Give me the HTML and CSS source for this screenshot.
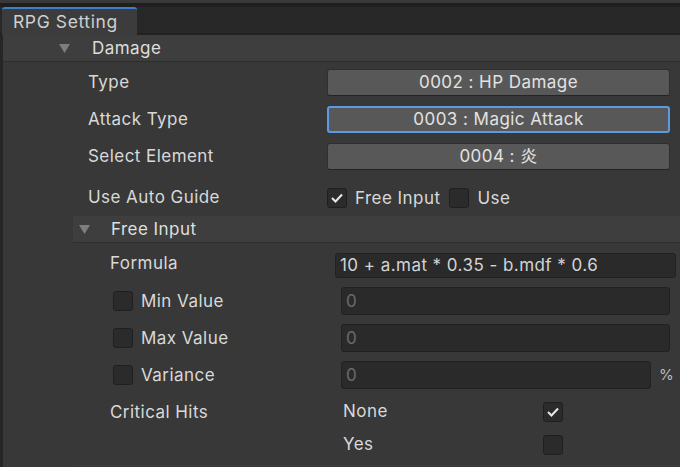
FILE: index.html
```html
<!DOCTYPE html>
<html>
<head>
<meta charset="utf-8">
<link rel="stylesheet" href="styles.css">
</head>
<body>
<div class="chrome"></div>
<div class="tabbar"><div class="tab">RPG Setting</div></div>
<div class="main">
  <div class="foldout foldout-damage">
    <svg class="tri" width="11" height="9" viewBox="0 0 11 9"><polygon points="0,0 11,0 5.5,9" fill="#7e7e7e"/></svg>
    <span>Damage</span>
  </div>
  <div class="rows">
    <div class="row drow">
      <div class="label dlabel">Type</div>
      <div class="popup">0002 : HP Damage</div>
    </div>
    <div class="row drow">
      <div class="label dlabel">Attack Type</div>
      <div class="popup focused">0003 : Magic Attack</div>
    </div>
    <div class="row drow">
      <div class="label dlabel">Select Element</div>
      <div class="popup">0004 : 炎</div>
    </div>
    <div class="row guide-row">
      <div class="label dlabel">Use Auto Guide</div>
      <div class="toggles">
        <span class="check on"><svg width="12" height="10" viewBox="0 0 12 10"><polyline points="1,5 4.5,8.5 11,1.5" fill="none" stroke="#e8e8e8" stroke-width="2"/></svg></span>
        <span class="tlabel">Free Input</span>
        <span class="check"></span>
        <span class="tlabel">Use</span>
      </div>
    </div>
  </div>
  <div class="section">
    <div class="foldout foldout-free">
      <svg class="tri" width="11" height="9" viewBox="0 0 11 9"><polygon points="0,0 11,0 5.5,9" fill="#7e7e7e"/></svg>
      <span>Free Input</span>
    </div>
    <div class="row formula-row">
      <div class="label flabel">Formula</div>
      <div class="field formula">10 + a.mat * 0.35 - b.mdf * 0.6</div>
    </div>
    <div class="row vrow">
      <div class="vleft"><span class="check"></span><span class="label">Min Value</span></div>
      <div class="field dim">0</div>
    </div>
    <div class="row vrow">
      <div class="vleft"><span class="check"></span><span class="label">Max Value</span></div>
      <div class="field dim">0</div>
    </div>
    <div class="row vrow">
      <div class="vleft"><span class="check"></span><span class="label">Variance</span></div>
      <div class="field dim var">0</div>
      <span class="pct">%</span>
    </div>
    <div class="crit">
      <div class="label flabel">Critical Hits</div>
      <div class="opts">
        <span class="label opt">None</span>
        <span class="check on"><svg width="12" height="10" viewBox="0 0 12 10"><polyline points="1,5 4.5,8.5 11,1.5" fill="none" stroke="#e8e8e8" stroke-width="2"/></svg></span>
        <span class="label opt">Yes</span>
        <span class="check"></span>
      </div>
    </div>
  </div>
</div>
</body>
</html>
```
FILE: styles.css
```css
html, body {
  margin: 0;
  padding: 0;
}
body {
  width: 680px;
  height: 467px;
  overflow: hidden;
  background: #383838;
  font-family: Inter, "Noto Sans CJK JP", sans-serif;
  font-size: 17px;
  letter-spacing: 0.45px;
  color: #d9d9d9;
}
.chrome {
  height: 3px;
  background: #393939;
}
.tabbar {
  height: 32px;
  box-sizing: border-box;
  border-top: 4px solid #1f1f1f;
  background: linear-gradient(to bottom, #282828 26px, #222222 26px);
  display: flex;
  align-items: flex-end;
  padding-left: 2px;
}
.tab {
  width: 135px;
  height: 28px;
  box-sizing: border-box;
  border-top: 2px solid #3d7fcb;
  border-radius: 3px 3px 0 0;
  background: #3c3c3c;
  padding-left: 11px;
  font-size: 17.5px;
  letter-spacing: 0.6px;
  line-height: 25px;
  color: #cfcfcf;
}
.main {
  border-left: 3px solid #262626;
  height: 432px;
}
.foldout {
  height: 26px;
  border-bottom: 1px solid #2e2e2e;
  background: #3e3e3e;
  display: flex;
  align-items: center;
  color: #dedede;
}
.foldout-damage {
  padding-left: 56px;
}
.foldout-damage .tri {
  margin-right: 22px;
}
.foldout-free {
  padding-left: 6px;
}
.foldout-free .tri {
  margin-right: 21px;
}
.rows {
  padding-top: 2px;
}
.row {
  display: flex;
  align-items: center;
}
.drow {
  height: 37px;
}
.dlabel {
  width: 239px;
  padding-left: 85px;
  flex-shrink: 0;
  margin-top: -2px;
}
.popup {
  width: 343px;
  height: 27px;
  box-sizing: border-box;
  background: #585858;
  border: 1px solid #2f2f2f;
  border-bottom-color: #242424;
  border-radius: 3px;
  text-align: center;
  line-height: 25px;
  color: #e2e2e2;
}
.popup.focused {
  border: 2px solid #5c9ae6;
  line-height: 23px;
}
.guide-row {
  height: 41px;
  padding-top: 4px;
  box-sizing: border-box;
}
.toggles {
  display: flex;
  align-items: center;
}
.check {
  width: 20px;
  height: 20px;
  box-sizing: border-box;
  background: #2b2b2b;
  border: 1px solid #1f1f1f;
  border-radius: 3px;
  display: inline-flex;
  align-items: center;
  justify-content: center;
  flex-shrink: 0;
}
.tlabel {
  margin-left: 8px;
  margin-right: 9px;
}
.section {
  margin-left: 70px;
  height: 250px;
  border-bottom: 1px solid #3e3e3e;
  box-sizing: border-box;
}
.formula-row {
  height: 39px;
}
.flabel {
  width: 225px;
  padding-left: 37px;
  flex-shrink: 0;
}
.field {
  height: 25px;
  box-sizing: border-box;
  background: #2a2a2a;
  border: 1px solid #212121;
  border-radius: 3px;
  padding-left: 4px;
  line-height: 23px;
  color: #d4d4d4;
}
.formula {
  width: 341px;
  margin-top: 6px;
}
.vrow {
  height: 37px;
}
.vleft {
  width: 268px;
  padding-left: 40px;
  box-sizing: border-box;
  display: flex;
  align-items: center;
  flex-shrink: 0;
}
.vleft .label {
  margin-left: 8px;
}
.field.dim {
  width: 329px;
  height: 28px;
  line-height: 26px;
  color: #6a6a6a;
}
.field.var {
  width: 310px;
}
.pct {
  margin-left: 8px;
  color: #bdbdbd;
  font-size: 15px;
}
.crit {
  display: flex;
  padding-top: 9px;
}
.opts {
  margin-left: 8px;
  display: grid;
  grid-template-columns: 200px 20px;
  row-gap: 13px;
  align-items: center;
}
.opt {
  margin-top: -3px;
}
```
